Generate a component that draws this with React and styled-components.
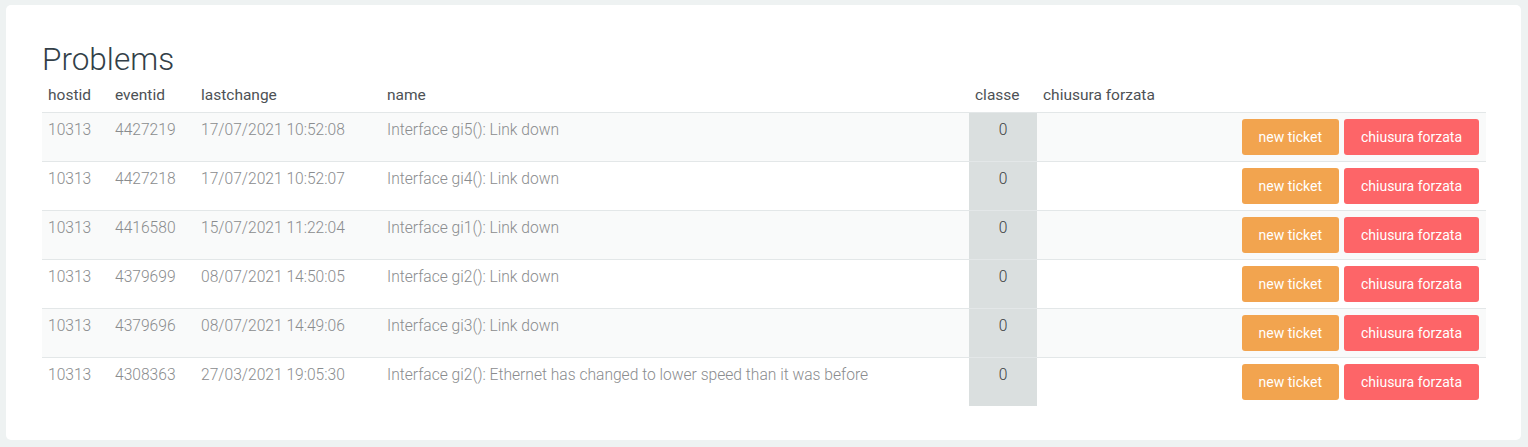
import styled, { createGlobalStyle } from "styled-components";

const GlobalStyle = createGlobalStyle`
  body {
    margin: 0;
    background: #eef2f2;
    font-family: Roboto, "Liberation Sans", sans-serif;
  }
`;

const problems = [
  { hostid: 10313, eventid: 4427219, lastchange: "17/07/2021 10:52:08", name: "Interface gi5(): Link down", classe: 0 },
  { hostid: 10313, eventid: 4427218, lastchange: "17/07/2021 10:52:07", name: "Interface gi4(): Link down", classe: 0 },
  { hostid: 10313, eventid: 4416580, lastchange: "15/07/2021 11:22:04", name: "Interface gi1(): Link down", classe: 0 },
  { hostid: 10313, eventid: 4379699, lastchange: "08/07/2021 14:50:05", name: "Interface gi2(): Link down", classe: 0 },
  { hostid: 10313, eventid: 4379696, lastchange: "08/07/2021 14:49:06", name: "Interface gi3(): Link down", classe: 0 },
  { hostid: 10313, eventid: 4308363, lastchange: "27/03/2021 19:05:30", name: "Interface gi2(): Ethernet has changed to lower speed than it was before", classe: 0 },
];

const App = () => {
  return (
    <Page>
      <GlobalStyle />
      <Card>
        <Title>Problems</Title>
        <Table>
          <colgroup>
            <col style={{ width: 67 }} />
            <col style={{ width: 86 }} />
            <col style={{ width: 186 }} />
            <col style={{ width: 588 }} />
            <col style={{ width: 68 }} />
            <col style={{ width: 199 }} />
            <col />
          </colgroup>
          <thead>
            <tr>
              <Th>hostid</Th>
              <Th>eventid</Th>
              <Th>lastchange</Th>
              <Th>name</Th>
              <Th>classe</Th>
              <Th>chiusura forzata</Th>
              <Th></Th>
            </tr>
          </thead>
          <tbody>
            {problems.map((p) => (
              <Row key={p.eventid}>
                <Td>{p.hostid}</Td>
                <Td>{p.eventid}</Td>
                <Td>{p.lastchange}</Td>
                <Td>{p.name}</Td>
                <ClassCell>{p.classe}</ClassCell>
                <Td></Td>
                <ActionCell>
                  <Actions>
                    <Button $variant="ticket">new ticket</Button>
                    <Button $variant="close">chiusura forzata</Button>
                  </Actions>
                </ActionCell>
              </Row>
            ))}
          </tbody>
        </Table>
      </Card>
    </Page>
  );
};

const Page = styled.div`
  padding: 5px 7px 7px 6px;
`;

const Card = styled.div`
  background: #fff;
  border-radius: 5px;
  padding: 36px 35px 34px 36px;
`;

const Title = styled.h1`
  margin: 0 0 2px;
  font-size: 31.5px;
  font-weight: 300;
  line-height: 37px;
  color: #333f48;
`;

const Table = styled.table`
  width: 100%;
  border-collapse: collapse;
  table-layout: fixed;
  font-size: 15.6px;
  line-height: 21px;
`;

const Th = styled.th`
  text-align: left;
  font-weight: 400;
  font-size: 15.5px;
  color: #4d5155;
  padding: 5px 6px 6px;
  border-bottom: 1px solid #e3e7e8;
  white-space: nowrap;
`;

const Row = styled.tr`
  border-bottom: 1px solid #e3e7e8;
  &:nth-child(odd) {
    background: #f9fafa;
  }
  &:last-child {
    border-bottom: none;
  }
`;

const Td = styled.td`
  color: #8a8c8e;
  font-weight: 300;
  padding: 7px 6px 5px;
  vertical-align: top;
  white-space: nowrap;
`;

const ClassCell = styled(Td)`
  background: #dadfdf;
  color: #3a3e42;
  text-align: center;
`;

const ActionCell = styled(Td)`
  padding: 6px 7px 6px 6px;
`;

const Actions = styled.div`
  display: flex;
  justify-content: flex-end;
  gap: 5px;
`;

const Button = styled.button`
  font-family: inherit;
  font-size: 14px;
  font-weight: 400;
  line-height: 20px;
  height: 36px;
  color: #fff;
  border: none;
  border-radius: 3px;
  padding: 8px 17px;
  background: ${(p) => (p.$variant === "ticket" ? "#f2a44f" : "#fd6568")};
`;

export default App;
